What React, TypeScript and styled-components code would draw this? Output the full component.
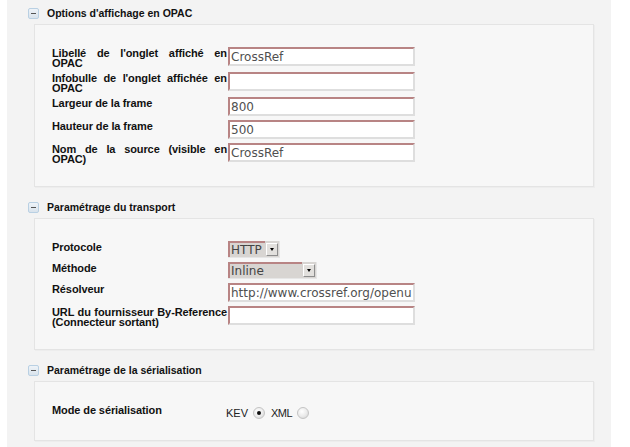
import React from "react";
import styled, { createGlobalStyle } from "styled-components";

const Global = createGlobalStyle`
  html, body { margin: 0; padding: 0; background: #ffffff; }
  body { font-family: "Liberation Sans", Arial, sans-serif; }
`;

const Page = styled.div`
  margin-left: 7px;
  width: 604px;
  min-height: 447px;
  box-sizing: border-box;
  background: #f3f3f3;
  padding: 4px 0 0 21px;
`;

const Section = styled.section`
  & + & { margin-top: 11px; }
`;

const Header = styled.div`
  display: flex;
  align-items: center;
  gap: 8px;
  height: 18px;
  margin-bottom: 2px;
  font-size: 10.5px;
  font-weight: bold;
  color: #111;
`;

const ToggleIcon = styled.span`
  position: relative;
  width: 11px;
  height: 11px;
  box-sizing: border-box;
  border: 1px solid #b9d0e3;
  border-radius: 2px;
  background: linear-gradient(#eef3f8, #d9e3ec);
  &::after {
    content: "";
    position: absolute;
    left: 2px;
    top: 4px;
    width: 5px;
    height: 1px;
    background: #555;
  }
`;

const Box = styled.div<{ $bottom?: number }>`
  margin-left: 6px;
  width: 560px;
  box-sizing: border-box;
  background: #f7f7f7;
  border: 1px solid #e4e4e4;
  box-shadow: 1px 1px 0 #ededed;
  padding: 22px 0 ${(p) => p.$bottom ?? 22}px 17px;
  display: flex;
  flex-direction: column;
  gap: 4px;
`;

const Row = styled.div`
  display: grid;
  grid-template-columns: 175px auto;
  column-gap: 1px;
  align-items: start;
`;

const Label = styled.div`
  font-size: 11px;
  line-height: 10px;
  letter-spacing: -0.1px;
  font-weight: bold;
  color: #111;
  text-align: justify;
  padding-top: 1px;
`;

const TextInput = styled.input`
  width: 187px;
  height: 19px;
  box-sizing: border-box;
  margin: 0;
  padding: 0 1px;
  font-family: "DejaVu Sans", Verdana, sans-serif;
  font-size: 12px;
  color: #505050;
  background: #fff;
  border-style: solid;
  border-width: 2px;
  border-color: #b88484 #dedede #dedede #b88484;
  outline: none;
`;

const SelectBox = styled.div<{ $width: number }>`
  display: inline-flex;
  width: ${(p) => p.$width}px;
  height: 17px;
  box-sizing: border-box;
  background: #d8d5d2;
  border-right: 1px solid #e6e6e6;
  border-bottom: 1px solid #e6e6e6;
`;

const SelectValue = styled.span`
  flex: 1;
  box-sizing: border-box;
  border-top: 2px solid #b88484;
  border-left: 2px solid #b88484;
  padding-left: 1px;
  font-family: "DejaVu Sans", Verdana, sans-serif;
  font-size: 12px;
  line-height: 14px;
  color: #444;
`;

const DropButton = styled.span`
  width: 12px;
  height: 13px;
  margin: 2px 1px 0 1px;
  box-sizing: border-box;
  background: #e2e0dd;
  border-style: solid;
  border-width: 1px;
  border-color: #ffffff #8d8d8d #8d8d8d #ffffff;
  display: flex;
  align-items: center;
  justify-content: center;
  &::after {
    content: "";
    border-left: 2px solid transparent;
    border-right: 2px solid transparent;
    border-top: 3px solid #000;
  }
`;

const RadioGroup = styled.div`
  display: flex;
  align-items: center;
  height: 13px;
  margin-top: 2px;
  margin-left: -2px;
  font-family: "Liberation Sans", Arial, sans-serif;
  font-size: 11px;
  color: #222;
`;

const RadioText = styled.span<{ $narrow?: boolean }>`
  letter-spacing: ${(p) => (p.$narrow ? "-0.5px" : "0")};
  margin-right: 5px;
`;

const Radio = styled.span<{ $checked?: boolean }>`
  position: relative;
  width: 12px;
  height: 12px;
  box-sizing: border-box;
  border-radius: 50%;
  border: 1px solid #c4c4c4;
  background: radial-gradient(circle at 40% 35%, #ffffff 0%, #eaeaea 55%, #cfcfcf 100%);
  margin-right: 6px;
  &::after {
    content: "";
    display: ${(p) => (p.$checked ? "block" : "none")};
    position: absolute;
    left: 3px;
    top: 3px;
    width: 4px;
    height: 4px;
    border-radius: 50%;
    background: #111;
  }
`;

type Field = { label: string; value: string };

const opacFields: Field[] = [
  { label: "Libellé de l'onglet affiché en OPAC", value: "CrossRef" },
  { label: "Infobulle de l'onglet affichée en OPAC", value: "" },
  { label: "Largeur de la frame", value: "800" },
  { label: "Hauteur de la frame", value: "500" },
  { label: "Nom de la source (visible en OPAC)", value: "CrossRef" },
];

export default function App() {
  return (
    <>
      <Global />
      <Page>
        <Section>
          <Header>
            <ToggleIcon />
            Options d'affichage en OPAC
          </Header>
          <Box>
            {opacFields.map((f) => (
              <Row key={f.label}>
                <Label>{f.label}</Label>
                <TextInput defaultValue={f.value} />
              </Row>
            ))}
          </Box>
        </Section>

        <Section>
          <Header>
            <ToggleIcon />
            Paramétrage du transport
          </Header>
          <Box>
            <Row>
              <Label>Protocole</Label>
              <SelectBox $width={52}>
                <SelectValue>HTTP</SelectValue>
                <DropButton />
              </SelectBox>
            </Row>
            <Row>
              <Label>Méthode</Label>
              <SelectBox $width={89}>
                <SelectValue>Inline</SelectValue>
                <DropButton />
              </SelectBox>
            </Row>
            <Row>
              <Label>Résolveur</Label>
              <TextInput defaultValue="http://www.crossref.org/openurl" />
            </Row>
            <Row>
              <Label>URL du fournisseur By-Reference (Connecteur sortant)</Label>
              <TextInput defaultValue="" />
            </Row>
          </Box>
        </Section>

        <Section>
          <Header>
            <ToggleIcon />
            Paramétrage de la sérialisation
          </Header>
          <Box $bottom={21}>
            <Row>
              <Label>Mode de sérialisation</Label>
              <RadioGroup>
                <RadioText>KEV</RadioText>
                <Radio $checked />
                <RadioText $narrow>XML</RadioText>
                <Radio />
              </RadioGroup>
            </Row>
          </Box>
        </Section>
      </Page>
    </>
  );
}
